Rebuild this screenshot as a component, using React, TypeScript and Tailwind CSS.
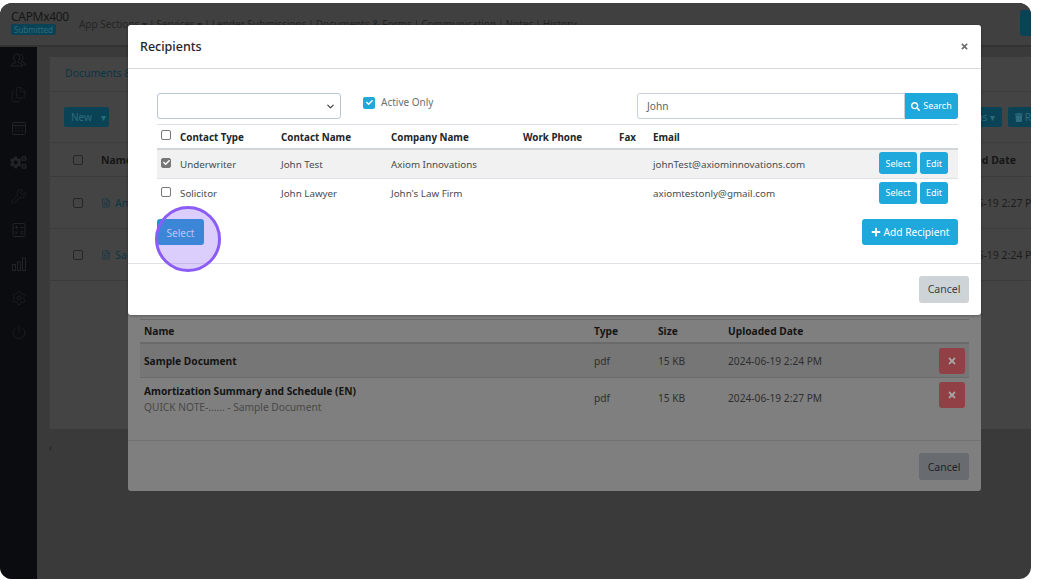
import React from "react";
import { FaCogs, FaSearch, FaPlus, FaTimes, FaCheck, FaTrash } from "react-icons/fa";
import { User, Files, Wrench, Settings, Power, ChevronDown, FileText } from "lucide-react";

const sideIcon = "h-[34px] flex items-center justify-center text-[#212427]";

function Glyph({ children }: { children: React.ReactNode }) {
  return (
    <svg width="16" height="16" viewBox="0 0 16 16" fill="none" stroke="currentColor" strokeWidth="1">
      {children}
    </svg>
  );
}

function Sidebar() {
  return (
    <aside className="w-[37px] shrink-0 bg-[#0a0c0f]">
      <div className="-mt-[4px] flex flex-col">
        <div className={sideIcon}>
          <svg width="17" height="17" viewBox="0 0 17 17" fill="none" stroke="currentColor" strokeWidth="1">
            <path d="M6.5 2c2 0 3.2 1.4 3.2 3.6 0 1.7-.7 3-1.5 3.7v1.2c1.8.6 3.6 1.3 4.3 2.2.2.3.2.8.2 1.3H1c0-.5 0-1 .2-1.3.7-.9 2.5-1.6 4.3-2.2V9.3C4.6 8.6 3.8 7.3 3.8 5.6 3.8 3.4 4.7 2 6.5 2Z" />
            <path d="M10.5 2.3c1.6.3 2.5 1.6 2.5 3.3 0 1.3-.5 2.4-1.2 3.1v1.1c1.5.5 3.2 1.2 3.7 2 .2.3.2.7.2 1.2h-2" />
          </svg>
        </div>
        <div className={sideIcon}><Files size={17} strokeWidth={1} /></div>
        <div className={sideIcon}>
          <Glyph>
            <rect x="1.5" y="2.5" width="13" height="12" rx="1" />
            <path d="M1.5 5.5h13" />
            <path d="M4 8h1.5M7.2 8h1.500M10.5 8h1.500M4 11h1.500M7.200 11h1.500M10.500 11h1.500" />
          </Glyph>
        </div>
        <div className={sideIcon}><FaCogs size={17} /></div>
        <div className={sideIcon}><Wrench size={17} strokeWidth={1} /></div>
        <div className={sideIcon}>
          <Glyph>
            <rect x="2" y="1.5" width="12" height="13" rx="1" />
            <path d="M4 5.5h3M5.5 4v3M9.500 5.500h3M4.200 9.500l2.400 2.400M6.600 9.500l-2.400 2.400M9.500 9.800h3M9.500 11.800h3" />
          </Glyph>
        </div>
        <div className={sideIcon}>
          <Glyph>
            <rect x="1.5" y="8.5" width="3" height="6" />
            <rect x="6.5" y="6" width="3" height="8.5" />
            <rect x="11.5" y="2" width="3" height="12.5" />
          </Glyph>
        </div>
        <div className={sideIcon}><Settings size={16} strokeWidth={1} /></div>
        <div className={sideIcon}><Power size={16} strokeWidth={1} /></div>
      </div>
    </aside>
  );
}

function BackRow({ name, date }: { name: string; date: string }) {
  return (
    <div className="h-[52px] border-b border-[#3b3b3b] flex items-center text-[10.5px] text-[#1c1c1c]">
      <div className="w-[10px] h-[10px] ml-[23px] mr-[18px] border border-[#262626] rounded-[2px]" />
      <FileText size={10} strokeWidth={1.5} className="text-[#0b3545] mr-[4px]" />
      <span className="text-[#0b3545] whitespace-nowrap pt-[2px]">{name}</span>
      <span className="ml-auto mr-[-10px] whitespace-nowrap pt-[2px]">{date}</span>
    </div>
  );
}

function Background() {
  return (
    <div className="flex flex-col h-full bg-[#3a3a3a]">
      <header className="h-[44px] shrink-0 bg-[#404040] border-b-2 border-[#323232] flex items-start relative">
        <div className="pl-[11px] pt-[8px] text-[#161616] leading-none">
          <div className="text-[12px] tracking-[-0.3px]">CAPMx400</div>
          <div className="mt-[1px] w-[45px] h-[11px] rounded-[2px] bg-[#0a4355] text-[8px] leading-[11px] text-center text-[#2d6b7d]">Submitted</div>
        </div>
        <div className="ml-[10px] mt-[14px] text-[10px] text-[#242424] whitespace-nowrap flex gap-[2px]">
          <span>App Sections ▾</span><span>|</span><span>Services ▾</span><span>|</span><span>Lender Submissions</span><span>|</span><span>Documents &amp; Forms</span><span>|</span><span>Communication</span><span>|</span><span>Notes</span><span>|</span><span>History</span>
        </div>
        <div className="absolute right-0 top-[7px] w-[11px] h-[26px] rounded-l-[3px] bg-[#0a4355]" />
      </header>
      <div className="flex flex-1 min-h-0">
        <Sidebar />
        <main className="flex-1 min-w-0 pl-[12px] pt-[10px]">
          <section className="h-[372px] bg-[#444444] border-l border-[#3d3d3d]">
            <div className="h-[35px] border-b border-[#3d3d3d] pl-[15px] pt-[9px] text-[10.5px] text-[#0b3545]">Documents &amp; Forms</div>
            <div className="pl-[14px] pt-[15px] h-[51px] flex justify-between border-b border-[#3d3d3d]">
              <div className="w-[45px] h-[20px] rounded-[2px] bg-[#0a4355] text-[10px] leading-[20px] pl-[7px] text-[#2d6b7d]">New <span className="ml-[6px]">▾</span></div>
              <div className="flex gap-[6px]">
                <div className="w-[60px] h-[20px] rounded-[2px] bg-[#0a4355] text-[10px] leading-[20px] text-right pr-[7px] text-[#2d6b7d]">ns ▾</div>
                <div className="w-[23px] h-[20px] rounded-l-[2px] bg-[#0a4355] flex items-center pl-[7px] gap-[2px] text-[10px] text-[#2d6b7d]"><FaTrash size={9} /><span>R</span></div>
              </div>
            </div>
            <div className="h-[34px] border-b border-[#3b3b3b] flex items-center text-[10.5px] font-bold text-[#161616]">
              <div className="w-[10px] h-[10px] ml-[23px] mr-[18px] border border-[#262626] rounded-[2px]" />
              <span className="pt-[2px]">Name</span>
              <span className="ml-auto mr-[15px] pt-[2px]">Uploaded Date</span>
            </div>
            <BackRow name="Amortization Summary and Schedule (EN)" date="2024-06-19 2:27 PM" />
            <BackRow name="Sample Document" date="2024-06-19 2:24 PM" />
          </section>
          <div className="mt-[14px] text-[9px] leading-none text-[#1c1c1c]">‹</div>
        </main>
      </div>
    </div>
  );
}

function RearRow({ title, note, date, tall, shade }: { title: string; note?: string; date: string; tall?: boolean; shade?: boolean }) {
  return (
    <div className={`flex items-start text-[10.2px] text-[#2e2e2e] ${tall ? "h-[62px]" : "h-[34px] border-b border-[#6c6c6c]"} ${shade ? "bg-[#767676]" : ""}`}>
      <div className="w-[454px] pl-[4px]">
        <div className={`font-bold text-[#141414] ${tall ? "pt-[6px]" : "pt-[10px]"} leading-[15px]`}>{title}</div>
        {note && <div className="text-[#484848] leading-[15px] mt-[1px]">{note}</div>}
      </div>
      <div className={`w-[64px] leading-[15px] ${tall ? "pt-[13px]" : "pt-[10px]"}`}>pdf</div>
      <div className={`w-[70px] leading-[15px] ${tall ? "pt-[13px]" : "pt-[10px]"}`}>15 KB</div>
      <div className={`w-[211px] leading-[15px] ${tall ? "pt-[13px]" : "pt-[10px]"}`}>{date}</div>
      <div className="mt-[4px] w-[26px] h-[26px] rounded-[3px] bg-[#914045] flex items-center justify-center text-[#a8a8a8]">
        <FaTimes size={10} />
      </div>
    </div>
  );
}

function RearModal() {
  return (
    <div className="absolute left-[128px] top-[22px] w-[853px] h-[466px] rounded-[3px] bg-[#7f7f7f] flex flex-col justify-end">
      <div className="px-[12px]">
        <div className="h-[25px] border-t border-b-2 border-[#6a6a6a] flex items-center text-[10.2px] font-bold text-[#141414] pt-[2px]">
          <div className="w-[454px] pl-[4px]">Name</div>
          <div className="w-[64px]">Type</div>
          <div className="w-[70px]">Size</div>
          <div>Uploaded Date</div>
        </div>
        <RearRow title="Sample Document" date="2024-06-19 2:24 PM" shade />
        <RearRow title="Amortization Summary and Schedule (EN)" note="QUICK NOTE-...... - Sample Document" date="2024-06-19 2:27 PM" tall />
      </div>
      <div className="h-[51px] border-t border-[#727272] flex items-center justify-end pr-[12px]">
        <div className="w-[50px] h-[27px] rounded-[3px] bg-[#686c70] text-[10.5px] leading-[28px] text-center text-[#202224]">Cancel</div>
      </div>
    </div>
  );
}

function Check({ checked }: { checked?: boolean }) {
  return (
    <span className={`flex items-center justify-center w-[10px] h-[10px] rounded-[2px] border ${checked ? "bg-[#767676] border-[#767676] text-white" : "bg-white border-[#767676]"}`}>
      {checked && <FaCheck size={7} />}
    </span>
  );
}

function Recipient({ type, name, company, email, checked, first }: { type: string; name: string; company: string; email: string; checked?: boolean; first?: boolean }) {
  const cell = first ? "pl-[3px] pt-[3px]" : "pl-[3px] pt-[2px]";
  return (
    <tr className={first ? "h-[30px] bg-[#f1f1f1] border-b border-[#dee2e6]" : "h-[29px]"}>
      <td className="pl-[4px] pb-[2px]"><Check checked={checked} /></td>
      <td className={first ? "pl-[4px] pt-[3px]" : "pl-[4px] pt-[2px]"}>{type}</td>
      <td className={cell}>{name}</td>
      <td className={cell}>{company}</td>
      <td />
      <td />
      <td className={cell}>{email}</td>
      <td className="pb-[1px]">
        <div className="flex gap-[3px] justify-end pr-[10px]">
          <button className="w-[38px] h-[22px] rounded-[3px] bg-[#1fa8dc] text-white text-[9px]">Select</button>
          <button className="w-[28px] h-[22px] rounded-[3px] bg-[#1fa8dc] text-white text-[9px]">Edit</button>
        </div>
      </td>
    </tr>
  );
}

function FrontModal() {
  return (
    <div className="absolute left-[128px] top-[22px] w-[853px] h-[290px] rounded-[3px] bg-white flex flex-col shadow-[0_1px_3px_rgba(0,0,0,0.3)]">
      <div className="h-[44px] shrink-0 border-b border-[#d5d9dd] flex items-center justify-between px-[12px]">
        <h2 className="text-[12.5px] font-medium text-[#212529] pt-[2px]">Recipients</h2>
        <FaTimes size={9} className="text-[#6f6f6f]" />
      </div>
      <div className="flex-1 pl-[29px] pr-[23px] pt-[24px]">
        <div className="flex h-[26px] items-start">
          <div className="w-[184px] h-[26px] rounded-[3px] border border-[#b9c6d3] flex items-center justify-end pr-[4px] text-[#3a3a3a]">
            <ChevronDown size={11} strokeWidth={2.5} />
          </div>
          <div className="ml-[22px] mt-[2px] flex items-center gap-[6px]">
            <span className="w-[12px] h-[12px] rounded-[2px] bg-[#1fa8dc] flex items-center justify-center text-white"><FaCheck size={7} /></span>
            <span className="text-[10px] text-[#6a6f73]">Active Only</span>
          </div>
          <div className="ml-auto flex">
            <div className="w-[268px] h-[26px] rounded-l-[3px] border border-[#c5d0da] pl-[9px] text-[10.2px] leading-[25px] text-[#5f6469]">John</div>
            <div className="w-[53px] h-[26px] rounded-r-[3px] bg-[#1fa8dc] text-white flex items-center justify-center gap-[3px] text-[9px]">
              <FaSearch size={9} /> Search
            </div>
          </div>
        </div>
        <table className="mt-[5px] w-[801px] table-fixed border-collapse text-[9.8px] text-[#474c50]">
          <colgroup>
            <col className="w-[19px]" /><col className="w-[102px]" /><col className="w-[110px]" /><col className="w-[132px]" /><col className="w-[96px]" /><col className="w-[34px]" /><col className="w-[208px]" /><col />
          </colgroup>
          <thead>
            <tr className="h-[24px] border-t border-[#dee2e6] border-b-2 border-b-[#d0d5da] text-left text-[#212529] font-bold">
              <th className="pl-[4px] pb-[3px]"><Check /></th>
              <th className="pl-[4px] pt-[4px]">Contact Type</th>
              <th className="pl-[3px] pt-[4px]">Contact Name</th>
              <th className="pl-[3px] pt-[4px]">Company Name</th>
              <th className="pl-[3px] pt-[4px]">Work Phone</th>
              <th className="pl-[3px] pt-[4px]">Fax</th>
              <th className="pl-[3px] pt-[4px]">Email</th>
              <th />
            </tr>
          </thead>
          <tbody>
            <Recipient first checked type="Underwriter" name="John Test" company="Axiom Innovations" email="johnTest@axiominnovations.com" />
            <Recipient type="Solicitor" name="John Lawyer" company="John's Law Firm" email="axiomtestonly@gmail.com" />
          </tbody>
        </table>
        <div className="mt-[11px] flex justify-between">
          <button className="w-[47px] h-[26px] rounded-[3px] bg-[#1b98cc] text-[#dfe9f7] text-[10px] pt-[3px]">Select</button>
          <button className="w-[96px] h-[26px] rounded-[3px] bg-[#1fa8dc] text-white text-[10.2px] pt-[3px] flex items-center justify-center gap-[3px]">
            <FaPlus size={10} className="-mt-[3px]" /> Add Recipient
          </button>
        </div>
      </div>
      <div className="h-[52px] shrink-0 border-t border-[#dee2e6] flex items-center justify-end pr-[12px]">
        <button className="w-[50px] h-[27px] rounded-[3px] bg-[#ced3d8] text-[10.5px] text-[#3a3f44]">Cancel</button>
      </div>
    </div>
  );
}

export default function App() {
  return (
    <div className="w-[1041px] h-[580px] bg-white overflow-hidden pt-[3px] font-['Open_Sans','Noto_Sans',sans-serif]">
      <div className="relative w-[1031px] h-[576px] rounded-[12px] overflow-hidden">
        <Background />
        <RearModal />
        <FrontModal />
        <div className="absolute left-[155px] top-[203px] w-[66px] h-[66px] rounded-full border-[3px] border-[#8b5cf6] bg-[#8b5cf6]/30" />
      </div>
    </div>
  );
}
